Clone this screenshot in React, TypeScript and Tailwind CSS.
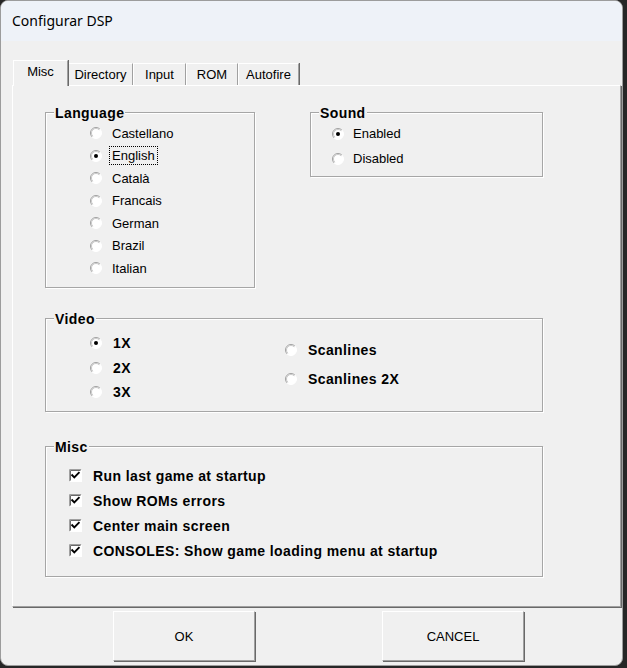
import type { ReactNode } from 'react';

const LANGUAGES = ['Castellano', 'English', 'Català', 'Francais', 'German', 'Brazil', 'Italian'];
const MISC_OPTIONS = [
  'Run last game at startup',
  'Show ROMs errors',
  'Center main screen',
  'CONSOLES: Show game loading menu at startup',
];

function Radio({ checked = false }: { checked?: boolean }) {
  return (
    <svg width="12" height="12" viewBox="0 0 12 12" className="shrink-0">
      <circle cx="6" cy="6" r="5.5" fill="#ffffff" />
      <path d="M2.1 9.9 A5.5 5.5 0 0 1 9.9 2.1" fill="none" stroke="#a0a0a0" strokeWidth="1" />
      <path d="M9.9 2.1 A5.5 5.5 0 0 1 2.1 9.9" fill="none" stroke="#ffffff" strokeWidth="1" />
      <path d="M2.8 9.2 A4.5 4.5 0 0 1 9.2 2.8" fill="none" stroke="#c8c8c8" strokeWidth="1" />
      {checked && <circle cx="6" cy="6" r="2" fill="#000000" />}
    </svg>
  );
}

function Checkbox() {
  return (
    <svg width="13" height="13" viewBox="0 0 13 13" className="shrink-0">
      <rect x="0" y="0" width="13" height="13" fill="#ffffff" />
      <path d="M0.5 12.5 V0.5 H12.5" fill="none" stroke="#a0a0a0" />
      <path d="M1.5 11.5 V1.5 H11.5" fill="none" stroke="#696969" />
      <path d="M0.5 12.5 H12.5 V0.5" fill="none" stroke="#ffffff" />
      <path d="M3.2 6.2 L5.3 8.4 L9.8 3.8" fill="none" stroke="#000000" strokeWidth="1.9" strokeLinecap="square" />
    </svg>
  );
}

function GroupBox({ label, className, children }: { label: string; className: string; children: ReactNode }) {
  return (
    <div className={`relative shrink-0 border border-[#a6a6a6] shadow-[inset_1px_1px_0_#ffffff,1px_1px_0_#ffffff] ${className}`}>
      <span className="absolute left-[8px] top-[-8px] bg-[#f0f0f0] px-[1px] text-[14px] leading-[17px] font-bold tracking-[0.4px]">
        {label}
      </span>
      {children}
    </div>
  );
}

function Tab({ label, width, active = false }: { label: string; width: string; active?: boolean }) {
  if (active) {
    return (
      <div
        className={`relative z-10 -mb-px flex h-[26px] items-start justify-center pt-[4px] bg-[#f0f0f0] border-l border-t border-white border-r border-r-[#a0a0a0] shadow-[1px_0_0_#696969] ${width}`}
      >
        {label}
      </div>
    );
  }
  return (
    <div
      className={`flex h-[22px] items-center justify-center border-l border-t border-white border-r border-r-[#a0a0a0] shadow-[1px_0_0_#696969] ${width}`}
    >
      {label}
    </div>
  );
}

function WinButton({ children }: { children: ReactNode }) {
  return (
    <button className="flex h-[50px] w-[142px] items-center justify-center bg-[#f0f0f0] border-l border-t border-white border-r border-b border-r-[#a0a0a0] border-b-[#a0a0a0] shadow-[1px_1px_0_#696969] text-[13px]">
      {children}
    </button>
  );
}

export default function App() {
  return (
    <div
      className="w-[627px] h-[668px] bg-[#262626] text-black text-[13px] leading-none"
      style={{ fontFamily: '"Liberation Sans", Arial, sans-serif' }}
    >
      <div className="w-[623px] h-[666px] rounded-[8px] overflow-hidden border border-[#9c9c9c] bg-[#f0f0f0] flex flex-col">
        <div className="h-[40px] shrink-0 bg-[#eef2f8] flex items-center pl-[11px]">
          <span className="text-[14px]" style={{ fontFamily: '"Noto Sans", "Open Sans", sans-serif' }}>
            Configurar DSP
          </span>
        </div>

        <div className="flex items-end ml-[12px] mt-[19px] h-[25px]">
          <Tab label="Misc" width="w-[55px]" active />
          <Tab label="Directory" width="w-[65px]" />
          <Tab label="Input" width="w-[53px]" />
          <Tab label="ROM" width="w-[52px]" />
          <Tab label="Autofire" width="w-[61px]" />
        </div>

        <div className="ml-[11px] w-[609px] h-[522px] shrink-0 border-l border-t border-white border-r border-b border-r-[#a0a0a0] border-b-[#a0a0a0] shadow-[1px_1px_0_#696969] pt-[26px] pl-[32px] flex flex-col">
          <div className="flex items-start">
            <GroupBox label="Language" className="w-[210px] h-[176px]">
              <div className="flex flex-col pt-[9px] pl-[44px]">
                {LANGUAGES.map((lang) => (
                  <div key={lang} className="h-[22.5px] flex items-center gap-[10px]">
                    <Radio checked={lang === 'English'} />
                    {lang === 'English' ? (
                      <span className="outline outline-1 outline-dotted outline-black outline-offset-[2px]">{lang}</span>
                    ) : (
                      <span>{lang}</span>
                    )}
                  </div>
                ))}
              </div>
            </GroupBox>

            <GroupBox label="Sound" className="ml-[55px] w-[233px] h-[65px]">
              <div className="flex flex-col pt-[8px] pl-[21px]">
                <div className="h-[25px] flex items-center gap-[9px]">
                  <Radio checked />
                  <span>Enabled</span>
                </div>
                <div className="h-[25px] flex items-center gap-[9px]">
                  <Radio />
                  <span>Disabled</span>
                </div>
              </div>
            </GroupBox>
          </div>

          <GroupBox label="Video" className="mt-[30px] w-[498px] h-[94px]">
            <div className="flex pl-[44px] text-[14px] font-bold tracking-[0.4px]">
              <div className="w-[195px] flex flex-col pt-[12px]">
                {['1X', '2X', '3X'].map((v) => (
                  <div key={v} className="h-[24.5px] flex items-center gap-[11px]">
                    <Radio checked={v === '1X'} />
                    <span>{v}</span>
                  </div>
                ))}
              </div>
              <div className="flex flex-col pt-[16px]">
                {['Scanlines', 'Scanlines 2X'].map((v) => (
                  <div key={v} className="h-[29px] flex items-center gap-[11px]">
                    <Radio />
                    <span>{v}</span>
                  </div>
                ))}
              </div>
            </div>
          </GroupBox>

          <GroupBox label="Misc" className="mt-[34px] w-[498px] h-[131px]">
            <div className="flex flex-col pt-[16px] pl-[23px] text-[14px] font-bold tracking-[0.4px]">
              {MISC_OPTIONS.map((opt) => (
                <div key={opt} className="h-[25px] flex items-center gap-[11px]">
                  <Checkbox />
                  <span>{opt}</span>
                </div>
              ))}
            </div>
          </GroupBox>
        </div>

        <div className="flex mt-[4px] ml-[112px] gap-[127px]">
          <WinButton>OK</WinButton>
          <WinButton>CANCEL</WinButton>
        </div>
      </div>
    </div>
  );
}
